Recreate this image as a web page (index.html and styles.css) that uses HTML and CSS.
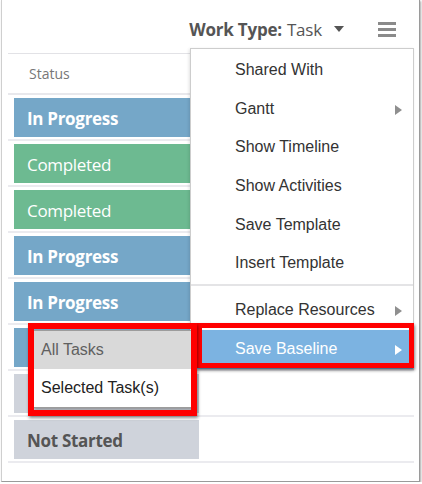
FILE: index.html
```html
<!DOCTYPE html>
<html>
<head>
<meta charset="utf-8">
<link rel="stylesheet" href="styles.css">
</head>
<body>
<div class="frame">
  <header class="toolbar">
    <div class="worktype"><span class="wt-label">Work Type:</span> <span class="wt-value">Task</span><span class="caret"></span></div>
    <div class="hamburger"><span></span><span></span><span></span></div>
  </header>
  <div class="grid">
    <div class="grid-head">Status</div>
    <div class="row"><div class="badge blue strong">In Progress</div></div>
    <div class="row"><div class="badge green">Completed</div></div>
    <div class="row"><div class="badge green">Completed</div></div>
    <div class="row"><div class="badge blue strong">In Progress</div></div>
    <div class="row"><div class="badge blue strong">In Progress</div></div>
    <div class="row"><div class="badge blue strong"></div></div>
    <div class="row"><div class="badge gray strong"></div></div>
    <div class="row"><div class="badge gray strong">Not Started</div></div>
  </div>

  <ul class="menu">
    <li class="item">Shared With</li>
    <li class="item has-sub">Gantt</li>
    <li class="item">Show Timeline</li>
    <li class="item">Show Activities</li>
    <li class="item">Save Template</li>
    <li class="item">Insert Template</li>
    <li class="sep"></li>
    <li class="item has-sub">Replace Resources</li>
    <li class="item has-sub active">Save Baseline</li>
  </ul>

  <ul class="submenu">
    <li class="sub-item hover">All Tasks</li>
    <li class="sub-item">Selected Task(s)</li>
  </ul>

  <div class="mark mark-baseline"></div>
  <div class="mark mark-tasks"></div>
</div>
</body>
</html>
```

FILE: styles.css
```css
* { box-sizing: border-box; }
html, body { margin: 0; padding: 0; background: #fff; }

.frame {
  position: relative;
  margin-left: 1px;
  width: 419px;
  height: 482px;
  border-left: 1px solid #cfcfcf;
  border-right: 1px solid #9a9a9a;
  border-bottom: 1px solid #9a9a9a;
  box-shadow: 1px 1px 2px rgba(0,0,0,0.35);
  padding: 0 5px 0 6px;
  background: #fff;
  font-family: "Open Sans", "Noto Sans", sans-serif;
}

.toolbar {
  height: 54px;
  display: flex;
  align-items: center;
  justify-content: flex-end;
  padding: 5px 18px 0 0;
  border-bottom: 1px solid #e2e2e6;
}
.worktype {
  display: flex;
  align-items: center;
  font-size: 17px;
  color: #555;
  letter-spacing: -0.2px;
}
.wt-label { font-weight: 700; margin-right: 5px; }
.caret {
  width: 0; height: 0;
  margin-left: 12px;
  border-left: 5px solid transparent;
  border-right: 5px solid transparent;
  border-top: 6px solid #555;
}
.hamburger {
  margin-left: 34px;
  width: 18px;
  display: flex;
  flex-direction: column;
  gap: 3px;
}
.hamburger span { display: block; height: 3px; background: #8a8a8a; }

.grid-head {
  height: 41px;
  display: flex;
  align-items: center;
  padding-left: 21px;
  font-size: 14px;
  color: #777;
  border-bottom: 2px solid #e8e8ec;
}
.row {
  padding: 3px 0 2px 6px;
  border-bottom: 2px solid #ebebef;
  height: 46px;
}
.badge {
  width: 185px;
  height: 39px;
  display: flex;
  align-items: center;
  padding: 2px 0 0 13px;
  font-size: 17px;
  color: #fff;
  letter-spacing: -0.3px;
}
.badge.strong { font-weight: 700; }
.blue { background: #75a7c8; }
.green { background: #6dba91; }
.gray { background: #cfd3db; color: #555; }

.menu {
  position: absolute;
  left: 188px;
  top: 48px;
  width: 224px;
  margin: 0;
  padding: 2px 0 0;
  list-style: none;
  background: #fff;
  border: 1px solid #cdcdcd;
  box-shadow: -1px 1px 3px rgba(0,0,0,0.12);
  font-family: "Liberation Sans", Arial, sans-serif;
  font-size: 16px;
  color: #333;
}
.item {
  position: relative;
  height: 38.7px;
  line-height: 38.7px;
  padding-left: 44px;
}
.item.has-sub::after {
  content: "";
  position: absolute;
  right: 11px;
  top: 15px;
  border-top: 5px solid transparent;
  border-bottom: 5px solid transparent;
  border-left: 7px solid #8f8f8f;
}
.item.active { background: #7cb3e1; color: #fff; }
.item.active::after { border-left-color: #fff; }
.sep { height: 2px; margin: 1px 0 5px; background: #e4e4e6; }

.submenu {
  position: absolute;
  left: 31px;
  top: 330px;
  width: 160px;
  margin: 0;
  padding: 0;
  list-style: none;
  background: #fff;
  border: 1px solid #9c9c9c;
  box-shadow: 1px 2px 3px rgba(0,0,0,0.3);
  font-family: "Liberation Sans", Arial, sans-serif;
  font-size: 16px;
  color: #222;
}
.sub-item {
  height: 38px;
  line-height: 38px;
  padding-left: 7px;
}
.sub-item.hover { background: #d9d9d9; color: #606060; }

.mark {
  position: absolute;
  border: 5px solid #ff0000;
  box-shadow: 1px 2px 3px rgba(0,0,0,0.45);
}
.mark-baseline { left: 195px; top: 323px; width: 217px; height: 45px; }
.mark-tasks { left: 26px; top: 323px; width: 169px; height: 93px; border-width: 6px; }
```
